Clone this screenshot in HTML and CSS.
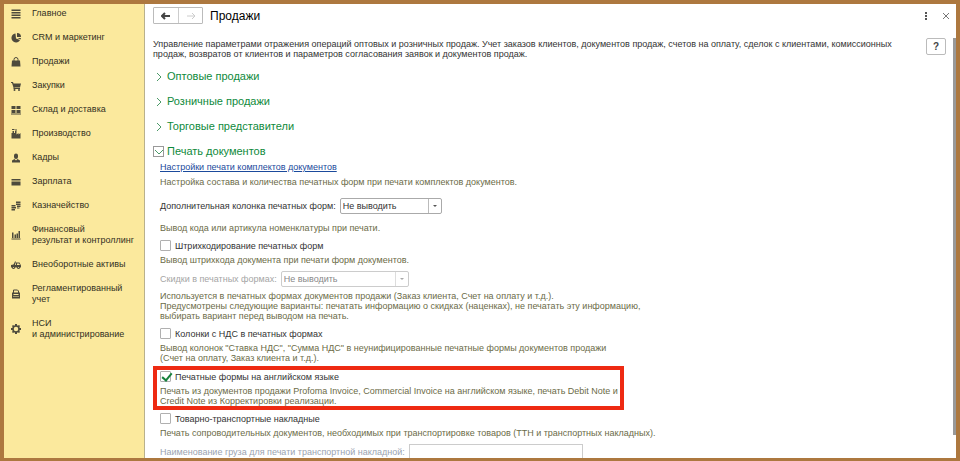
FILE: index.html
```html
<!DOCTYPE html>
<html lang="ru">

<head>
    <meta charset="UTF-8">
    <meta name="viewport" content="width=device-width, initial-scale=1.0">
    <title>Продажи</title>
    <link rel="stylesheet" href="styles.css">
</head>

<body>
    <div class="app">
        <nav class="sidebar">
            <a href="#">
                <svg viewBox="0 0 20 20"><path d="M1 1h18v3H1zM1 6h18v3H1zM1 11h18v3H1zM1 16h18v3H1z"/></svg>
                <span>Главное</span>
            </a>
            <a href="#">
                <svg viewBox="0 0 20 20"><path d="M9 1a9 9 0 1 0 9 13l-8-3z"/><path d="M12 0v8h8a8 8 0 0 0-8-8z"/><path d="M13 10h7l-1 3z"/></svg>
                <span>CRM и маркетинг</span>
            </a>
            <a href="#">
                <svg viewBox="0 0 20 20"><path d="M2 7h16l1 12H1z"/><path class="line" d="M6 10V5a4 4 0 0 1 8 0v5"/></svg>
                <span>Продажи</span>
            </a>
            <a href="#">
                <svg viewBox="0 0 20 20"><path d="M0 2h4l1 3h15l-2 8H7v1h11v2H5V13L2 4H0z"/><circle cx="7" cy="18" r="2"/><circle cx="16" cy="18" r="2"/></svg>
                <span>Закупки</span>
            </a>
            <a href="#">
                <svg viewBox="0 0 20 20"><path d="M1 2h8v6H1zM11 2h8v6h-8zM1 10h8v6H1zM11 10h8v6h-8zM0 17h20v2H0z"/></svg>
                <span>Склад и доставка</span>
            </a>
            <a href="#">
                <svg viewBox="0 0 20 20"><path d="M1 19V8h2V4h3v4h2V4h3v7l4-3v3l4-3v11zM2 0h5v2H2zM8 1h4v2H8z"/></svg>
                <span>Производство</span>
            </a>
            <a href="#">
                <svg viewBox="0 0 20 20"><path d="M6 5a4 4 0 0 1 8 0v3a4 4 0 0 1-8 0zM2 19v-4l5-3 3 3 3-3 5 3v4z"/></svg>
                <span>Кадры</span>
            </a>
            <a href="#">
                <svg viewBox="0 0 20 20"><path d="M1 4h18v3H1zM1 9h18v8H1z"/></svg>
                <span>Зарплата</span>
            </a>
            <a href="#">
                <svg viewBox="0 0 20 20"><path d="M10 1h9v3h-9zM10 5h9v3h-9zM12 9h7v3h-7zM12 13h5v2h-5zM1 8h8v3H1zM1 12h9v3H1zM1 16h7v3H1z"/></svg>
                <span>Казначейство</span>
            </a>
            <a href="#">
                <svg viewBox="0 0 20 20"><path d="M2 5h3v11H2zM7 9h3v7H7zM11 7h3v9h-3zM15 2h3v14h-3zM1 17h18v2H1z"/></svg>
                <span>Финансовый<br>результат и контроллинг</span>
            </a>
            <a href="#">
                <svg viewBox="0 0 20 20"><path d="M0 10l5-1 3-6h2l-2 7h2V5h7l3 6v4H0z"/><path class="cut" d="M12 7h4l2 3h-6z"/><circle cx="5" cy="15" r="3"/><circle cx="15" cy="15" r="3"/><circle class="cut" cx="5" cy="15" r="1"/><circle class="cut" cx="15" cy="15" r="1"/></svg>
                <span>Внеоборотные активы</span>
            </a>
            <a href="#">
                <svg viewBox="0 0 20 20"><path d="M2 7h16v12H2z"/><path class="line" d="M5 8V2h8l2 2v4"/><path class="cut" d="M5 10h10v2H5zM5 14h2v2H5zM9 14h2v2H9zM13 14h2v2h-2z"/></svg>
                <span>Регламентированный<br>учет</span>
            </a>
            <a href="#">
                <svg viewBox="0 0 20 20"><circle class="gear" cx="10" cy="10" r="6"/><path d="M8 0h4v4H8zM8 16h4v4H8zM0 8h4v4H0zM16 8h4v4h-4zM4 2l3 2-3 3-2-3zM16 2l2 2-2 3-3-3zM2 16l2-3 3 3-3 2zM18 16l-2 2-3-2 3-3z"/></svg>
                <span>НСИ<br>и администрирование</span>
            </a>
        </nav>

        <main class="content">
            <header class="titlebar">
                <div class="history">
                    <button type="button" aria-label="Назад"><svg viewBox="0 0 10 8"><path d="M4 1L1 4l3 3M1 4h8"/></svg></button>
                    <button type="button" aria-label="Вперед" disabled><svg viewBox="0 0 10 8"><path d="M6 1l3 3-3 3M9 4H1"/></svg></button>
                </div>
                <h1>Продажи</h1>
                <button type="button" class="icon-btn" aria-label="Еще"><svg viewBox="0 0 8 8"><path class="dots" d="M3 0h2v2H3zM3 3h2v2H3zM3 6h2v2H3z"/></svg></button>
                <button type="button" class="icon-btn" aria-label="Закрыть"><svg viewBox="0 0 8 8"><path d="M1 1l6 6M7 1L1 7"/></svg></button>
            </header>

            <div class="intro">
                <p>Управление параметрами отражения операций оптовых и розничных продаж. Учет заказов клиентов, документов продаж, счетов на оплату, сделок с клиентами, комиссионных продаж, возвратов от клиентов и параметров согласования заявок и документов продаж.</p>
                <button type="button" class="help">?</button>
            </div>

            <div class="groups">
                <button type="button" class="group"><span class="mark"><svg viewBox="0 0 8 10"><path d="M2 1l4 4-4 4"/></svg></span>Оптовые продажи</button>
                <button type="button" class="group"><span class="mark"><svg viewBox="0 0 8 10"><path d="M2 1l4 4-4 4"/></svg></span>Розничные продажи</button>
                <button type="button" class="group"><span class="mark"><svg viewBox="0 0 8 10"><path d="M2 1l4 4-4 4"/></svg></span>Торговые представители</button>
                <button type="button" class="group open"><span class="mark"><svg viewBox="0 0 8 10"><path d="M0 3l4 4 4-4"/></svg></span>Печать документов</button>
            </div>

            <form class="settings">
                <a class="link" href="#">Настройки печати комплектов документов</a>
                <p class="note">Настройка состава и количества печатных форм при печати комплектов документов.</p>

                <div class="field first-field">
                    <label for="extra-column">Дополнительная колонка печатных форм:</label>
                    <span class="combo">
                        <select id="extra-column"><option>Не выводить</option></select>
                    </span>
                </div>
                <p class="note after-first">Вывод кода или артикула номенклатуры при печати.</p>

                <label class="check"><input type="checkbox">Штрихкодирование печатных форм</label>
                <p class="note">Вывод штрихкода документа при печати форм документов.</p>

                <div class="field disabled">
                    <label for="discounts">Скидки в печатных формах:</label>
                    <span class="combo wide">
                        <select id="discounts" disabled><option>Не выводить</option></select>
                    </span>
                </div>
                <p class="note">Используется в печатных формах документов продажи (Заказ клиента, Счет на оплату и т.д.).<br>Предусмотрены следующие варианты: печатать информацию о скидках (наценках), не печатать эту информацию,<br>выбирать вариант перед выводом на печать.</p>

                <label class="check"><input type="checkbox">Колонки с НДС в печатных формах</label>
                <p class="note">Вывод колонок "Ставка НДС", "Сумма НДС" в неунифицированные печатные формы документов продажи<br>(Счет на оплату, Заказ клиента и т.д.).</p>

                <div class="highlight">
                    <label class="check"><input type="checkbox" checked>Печатные формы на английском языке</label>
                    <p class="note">Печать из документов продажи Profoma Invoice, Commercial Invoice на английском языке, печать Debit Note и<br>Credit Note из Корректировки реализации.</p>
                </div>

                <label class="check after-highlight"><input type="checkbox">Товарно-транспортные накладные</label>
                <p class="note">Печать сопроводительных документов, необходимых при транспортировке товаров (ТТН и транспортных накладных).</p>

                <div class="field disabled cargo">
                    <label for="cargo">Наименование груза для печати транспортной накладной:</label>
                    <input type="text" id="cargo" disabled>
                </div>
            </form>
            <div class="scrollbar"></div>
        </main>
    </div>
</body>

</html>
```

FILE: styles.css
```css
* {
    box-sizing: border-box;
}

body {
    margin: 0;
    font-family: "Liberation Sans", Arial, sans-serif;
    font-size: 9px;
    line-height: 10px;
    color: #333;
}

h1,
p {
    margin: 0;
}

button,
select,
input {
    font: inherit;
    color: inherit;
    margin: 0;
    padding: 0;
}

button {
    background: none;
    border: none;
    cursor: pointer;
}

.app {
    display: flex;
    height: 100vh;
    border: 4px solid #ad783f;
    border-bottom-width: 3px;
    overflow: hidden;
}

/* sidebar */
.sidebar {
    flex: 0 0 141px;
    display: flex;
    flex-direction: column;
    gap: 13px;
    padding: 4px 0 0 7px;
    background-color: #fbe99d;
    border-right: 1px solid #b9b18c;
}

.sidebar a {
    display: flex;
    align-items: center;
    gap: 11px;
    line-height: 11px;
    color: #33301f;
    text-decoration: none;
    white-space: nowrap;
}

.sidebar svg {
    flex: none;
    width: 10px;
    height: 10px;
    fill: #4d4a3c;
}

.sidebar .line,
.sidebar .gear {
    fill: none;
    stroke: #4d4a3c;
    stroke-width: 2;
}

.sidebar .gear {
    stroke-width: 3;
}

.sidebar .cut {
    fill: #fbe99d;
}

/* main area */
.content {
    position: relative;
    flex: 1;
    min-width: 0;
    padding: 3px 0 0 8px;
    background-color: #fff;
    overflow: hidden;
}

.titlebar {
    display: flex;
    align-items: center;
    height: 17px;
}

.history {
    display: flex;
    border: 1px solid #bbb;
    border-radius: 1px;
}

.history button {
    display: flex;
    align-items: center;
    justify-content: center;
    width: 24px;
    height: 15px;
}

.history button + button {
    border-left: 1px solid #ccc;
}

.history svg {
    width: 10px;
    height: 8px;
    fill: none;
    stroke: #444;
    stroke-width: 2;
}

.history button:disabled svg {
    stroke: #ccc;
    stroke-width: 1;
}

.titlebar h1 {
    flex: 1;
    margin-left: 7px;
    font-size: 12px;
    line-height: 16px;
    font-weight: normal;
    color: #000;
}

.icon-btn {
    display: flex;
    align-items: center;
    justify-content: center;
    width: 20px;
    height: 16px;
}

.icon-btn svg {
    width: 8px;
    height: 8px;
    fill: none;
    stroke: #777;
}

.icon-btn .dots {
    fill: #555;
    stroke: none;
}

.intro {
    display: flex;
    justify-content: space-between;
    align-items: flex-start;
    margin-top: 14px;
}

.intro p {
    max-width: 740px;
    padding-top: 1px;
}

.help {
    width: 20px;
    height: 17px;
    margin-right: 10px;
    border: 1px solid #bbb;
    border-radius: 2px;
    font-size: 10px;
    font-weight: bold;
    color: #444;
}

/* collapsible groups */
.groups {
    display: flex;
    flex-direction: column;
    align-items: flex-start;
    gap: 10px;
    margin-top: 10px;
}

.group {
    display: flex;
    align-items: center;
    gap: 3px;
    height: 15px;
    font-size: 11px;
    line-height: 15px;
    color: #0f8a3c;
}

.mark {
    display: flex;
    align-items: center;
    justify-content: center;
    width: 11px;
    height: 11px;
}

.mark svg {
    width: 8px;
    height: 10px;
    fill: none;
    stroke: #4c9a68;
}

.open .mark {
    border: 1px solid #999;
}

/* settings form */
.settings {
    padding-left: 7px;
    margin-top: 3px;
}

.link {
    display: block;
    width: max-content;
    line-height: 11px;
    color: #1b4a9c;
}

.note {
    margin-top: 4px;
    color: #6b6b47;
}

.field {
    display: flex;
    align-items: center;
    gap: 4px;
    height: 16px;
    margin-top: 6px;
}

.first-field {
    margin-top: 11px;
}

.note.after-first {
    margin-top: 9px;
}

.combo {
    position: relative;
    width: 102px;
    height: 16px;
}

.combo.wide {
    width: 128px;
}

.combo select {
    appearance: none;
    width: 100%;
    height: 100%;
    padding-left: 2px;
    background-color: #fff;
    border: 1px solid #aaa;
    border-radius: 2px;
    opacity: 1;
}

.combo::before {
    content: "";
    position: absolute;
    top: 1px;
    bottom: 1px;
    right: 13px;
    border-left: 1px solid #bbb;
}

.combo::after {
    content: "";
    position: absolute;
    top: 7px;
    right: 5px;
    border: 2px solid transparent;
    border-top-color: #555;
    pointer-events: none;
}

.disabled {
    color: #a5a5a5;
}

.disabled select {
    color: #888;
    border-color: #ccc;
}

.disabled .combo::before {
    border-color: #ddd;
}

.disabled .combo::after {
    border-top-color: #aaa;
}

.cargo {
    color: #9aa3b0;
}

.disabled input {
    width: 174px;
    height: 16px;
    background-color: #fff;
    border: 1px solid #ccc;
}

.check {
    display: flex;
    align-items: center;
    gap: 4px;
    width: max-content;
    height: 11px;
    margin-top: 7px;
}

.check input {
    appearance: none;
    width: 11px;
    height: 11px;
    border: 1px solid #b0b0b0;
    border-radius: 1px;
    background-color: #fff;
}

.check input:checked {
    position: relative;
}

.check input:checked::after {
    content: "";
    position: absolute;
    left: 3px;
    top: -1px;
    width: 4px;
    height: 8px;
    border: solid #16813c;
    border-width: 0 2px 2px 0;
    transform: rotate(40deg);
}

.highlight {
    width: max-content;
    height: 44px;
    margin: 3px 0 0 -7px;
    padding: 1px 2px 0 3px;
    border: 4px solid #ee2a12;
}

.highlight .check {
    margin-top: 0;
}

.check.after-highlight {
    margin-top: 3px;
}

.scrollbar {
    position: absolute;
    top: 34px;
    right: 0;
    bottom: 23px;
    width: 3px;
    background-color: #999;
}
```
